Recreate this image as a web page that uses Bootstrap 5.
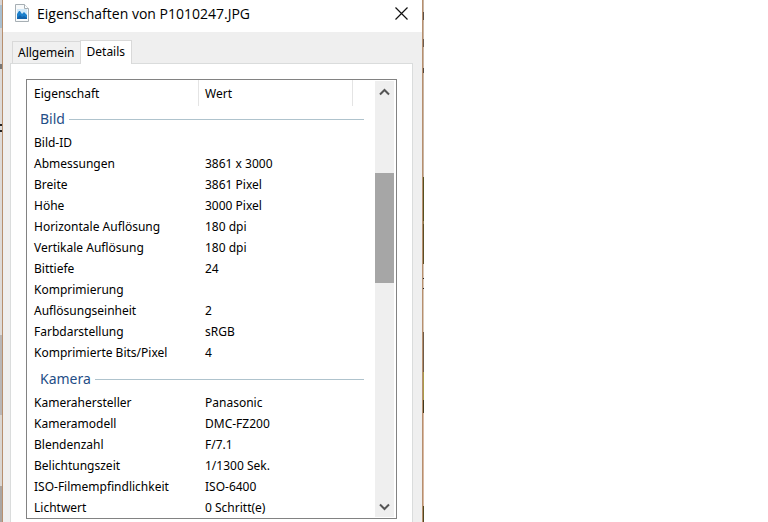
<!DOCTYPE html>
<html lang="de">
<head>
<meta charset="utf-8">
<meta name="viewport" content="width=device-width, initial-scale=1">
<title>Eigenschaften von P1010247.JPG</title>
<link href="https://cdn.jsdelivr.net/npm/bootstrap@5.3.0/dist/css/bootstrap.min.css" rel="stylesheet">
<style>
body { font-family: "Noto Sans", "Open Sans", sans-serif; font-size: 12px; line-height: 21px; color: #000; }
.edge-left { width: 2px; background: linear-gradient(#d8d5d5 0 5px, #a9bfd0 5px 28px, #d9d6d5 28px 64px, #777 64px 69px, #dedbd9 69px 124px, #222 124px 126px, #ddd 126px 130px, #222 130px 132px, #dedbd9 132px 335px, #b9b6b6 335px 415px, #dad6d2 415px 486px, #aaa5a2 486px); }
.edge-right { width: 1px; background: linear-gradient(#c8b5a4 0 12px, #5c5148 12px 20px, #c8b5a4 20px 39px, #6b5c50 39px 47px, #c8b5a4 47px 68px, #51483f 68px 73px, #c8b5a4 73px 177px, #55501f 177px 221px, #8d7b4f 221px 224px, #5a4e25 224px 264px, #d8c8b8 264px 278px, #222 278px 279px, #d8c8b8 279px 288px, #222 288px 289px, #d8c8b8 289px 332px, #6f5c48 332px 372px, #a89a4a 372px 400px, #40391c 400px 413px, #d8b8a2 413px 506px, #51481f 506px); }
.window { max-width: 421px; background: #efefef; border: solid #b78f6e; border-width: 0 1px; }
.title-bar { height: 32px; padding: 0 14px 6px 12px; }
.title-text { font: 14px/20px "Open Sans", sans-serif; color: #000; margin-left: 8px; padding-top: 1px; }
.close-btn { line-height: 0; color: #111; }
.tab-strip { padding: 8px 9px 0; }
.tab-strip .nav-link { border: 1px solid #d9d9d9; border-radius: 0; color: #000; font-size: 12px; line-height: 20px; padding: 1px 5px 0; background: #f0f0f0; border-bottom: 0; border-right: 0; }
.tab-strip .nav-link.active { background: #fff; border-right: 1px solid #d9d9d9; padding: 1px 6px 2px; color: #000; margin-bottom: -1px; position: relative; }
.panel { background: #fff; border: 1px solid #dadcdc; border-bottom: 0; margin: 0 9px 0 7px; padding: 15px 15px 3px; }
.list-box { border: 1px solid #828282; }
.props { table-layout: fixed; border-collapse: separate; border-spacing: 0; }
.c-name { width: 172px; }
.c-value { width: 154px; }
.props th, .props td { padding: 0 0 0 7px; font-weight: 400; height: 21px; white-space: nowrap; }
.props td + td, .props td, .props thead th + th { padding-left: 6px; }
.props thead th { height: 26px; border-right: 1px solid #e4e4e4; }
.props thead th:last-child { border: 0; }
.props th.group { padding: 0 11px 0 13px; height: 26px; font-size: 14px; line-height: 26px; color: #1f4e87; }
.props tbody + tbody th.group { padding-top: 3px; }
.rule { height: 1px; background: #afc3cd; }
.scroll-track { width: 19px; background: #efefef; margin: 1px 2px 1px 0; }
.scroll-btn { height: 21px; line-height: 0; color: #555; }
.scroll-thumb { height: 110px; margin-top: 71px; background: #a6a6a6; }
</style>
<script src="https://cdn.jsdelivr.net/npm/bootstrap@5.3.0/dist/js/bootstrap.bundle.min.js"></script>
</head>
<body class="bg-white">
<div class="d-flex min-vh-100">
  <div class="edge-left flex-shrink-0"></div>
  <main class="window flex-grow-1 d-flex flex-column">
    <header class="title-bar bg-white d-flex align-items-center">
      <svg width="14" height="18" viewBox="0 0 14 18" aria-hidden="true">
        <path d="M.5.5h9l4 4v13H.5z" fill="#f8fafb" stroke="#a7afb4"/>
        <path d="M9.500.5v4h4" fill="#fff" stroke="#a7afb4"/>
        <path d="M2 5h10v10H2z" fill="#d3e9f8"/>
        <path d="M2 10l2-3 1 0 2 3 2-2 3 3v4H2z" fill="#1b7fcb"/>
        <path d="M2 14l3-3 2 2 2-1 3 2v1H2z" fill="#1262aa"/>
      </svg>
      <h1 class="title-text mb-0">Eigenschaften von P1010247.JPG</h1>
      <button type="button" class="close-btn btn p-0 border-0 rounded-0 ms-auto" aria-label="Schließen">
        <svg width="13" height="13" viewBox="0 0 13 13" fill="none" stroke="currentColor" stroke-width="1.200"><path d="M.5.5l12 12M12.500.5l-12 12"/></svg>
      </button>
    </header>
    <div class="tab-strip nav d-flex align-items-end" role="tablist">
      <button type="button" class="nav-link" role="tab" aria-selected="false">Allgemein</button>
      <button type="button" class="nav-link active" role="tab" aria-selected="true" aria-controls="details">Details</button>
    </div>
    <section class="panel flex-grow-1" id="details" role="tabpanel">
      <div class="list-box d-flex">
        <div class="flex-grow-1">
          <table class="props w-100">
            <colgroup><col class="c-name"><col class="c-value"><col></colgroup>
            <thead><tr><th scope="col">Eigenschaft</th><th scope="col">Wert</th><th></th></tr></thead>
            <tbody>
              <tr><th class="group" colspan="3"><div class="d-flex align-items-center gap-1">Bild<span class="rule flex-grow-1"></span></div></th></tr>
              <tr><th scope="row">Bild-ID</th><td></td></tr>
              <tr><th scope="row">Abmessungen</th><td>3861 x 3000</td></tr>
              <tr><th scope="row">Breite</th><td>3861 Pixel</td></tr>
              <tr><th scope="row">Höhe</th><td>3000 Pixel</td></tr>
              <tr><th scope="row">Horizontale Auflösung</th><td>180 dpi</td></tr>
              <tr><th scope="row">Vertikale Auflösung</th><td>180 dpi</td></tr>
              <tr><th scope="row">Bittiefe</th><td>24</td></tr>
              <tr><th scope="row">Komprimierung</th><td></td></tr>
              <tr><th scope="row">Auflösungseinheit</th><td>2</td></tr>
              <tr><th scope="row">Farbdarstellung</th><td>sRGB</td></tr>
              <tr><th scope="row">Komprimierte Bits/Pixel</th><td>4</td></tr>
            </tbody>
            <tbody>
              <tr><th class="group" colspan="3"><div class="d-flex align-items-center gap-1">Kamera<span class="rule flex-grow-1"></span></div></th></tr>
              <tr><th scope="row">Kamerahersteller</th><td>Panasonic</td></tr>
              <tr><th scope="row">Kameramodell</th><td>DMC-FZ200</td></tr>
              <tr><th scope="row">Blendenzahl</th><td>F/7.1</td></tr>
              <tr><th scope="row">Belichtungszeit</th><td>1/1300 Sek.</td></tr>
              <tr><th scope="row">ISO-Filmempfindlichkeit</th><td>ISO-6400</td></tr>
              <tr><th scope="row">Lichtwert</th><td>0 Schritt(e)</td></tr>
            </tbody>
          </table>
        </div>
        <div class="scroll-track d-flex flex-column flex-shrink-0">
          <button type="button" class="scroll-btn btn p-0 border-0 rounded-0" aria-label="Nach oben">
            <svg width="11" height="8" viewBox="0 0 11 8" fill="none" stroke="currentColor" stroke-width="2"><path d="M1 6.500L5.500 2 10 6.500"/></svg>
          </button>
          <div class="scroll-thumb"></div>
          <button type="button" class="scroll-btn btn p-0 border-0 rounded-0 mt-auto" aria-label="Nach unten">
            <svg width="11" height="8" viewBox="0 0 11 8" fill="none" stroke="currentColor" stroke-width="2"><path d="M1 1.500L5.500 6 10 1.500"/></svg>
          </button>
        </div>
      </div>
    </section>
  </main>
  <div class="edge-right flex-shrink-0"></div>
</div>
</body>
</html>
